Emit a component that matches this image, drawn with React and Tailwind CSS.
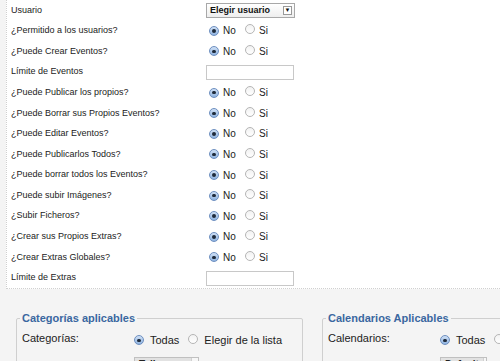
import React from "react";

function Radio({ on, size = 10 }) {
  if (on) {
    return (
      <span
        className="inline-flex items-center justify-center rounded-full border border-[#6d8fc0] bg-gradient-to-b from-[#cfe0f5] to-[#8fb3e0] shrink-0"
        style={{ width: size, height: size }}
      >
        <span className="block rounded-full bg-[#1e2a3a]" style={{ width: size * 0.35, height: size * 0.35 }} />
      </span>
    );
  }
  return (
    <span
      className="inline-block rounded-full border border-[#b5b5b5] bg-gradient-to-b from-[#f2f2f2] to-[#ffffff] shrink-0"
      style={{ width: size, height: size }}
    />
  );
}

function NoSi() {
  return (
    <div className="flex items-center text-[10px]">
      <Radio on />
      <span className="ml-[4px] w-[18px]">No</span>
      <span className="ml-[4px]"><Radio /></span>
      <span className="ml-[4px]">Si</span>
    </div>
  );
}

const rows = [
  ["Usuario", "select"],
  ["¿Permitido a los usuarios?", "radio"],
  ["¿Puede Crear Eventos?", "radio"],
  ["Límite de Eventos", "input"],
  ["¿Puede Publicar los propios?", "radio"],
  ["¿Puede Borrar sus Propios Eventos?", "radio"],
  ["¿Puede Editar Eventos?", "radio"],
  ["¿Puede Publicarlos Todos?", "radio"],
  ["¿Puede borrar todos los Eventos?", "radio"],
  ["¿Puede subir Imágenes?", "radio"],
  ["¿Subir Ficheros?", "radio"],
  ["¿Crear sus Propios Extras?", "radio"],
  ["¿Crear Extras Globales?", "radio"],
  ["Límite de Extras", "input"],
];

function ListBox({ label, w }) {
  return (
    <div className="flex mt-[8px] h-[20px] border border-[#c0c0c0]" style={{ width: w }}>
      <div className="flex-1 bg-[#e2e2e2] text-[10px] font-bold px-[4px] leading-[14px] text-[#222]">{label}</div>
      <div className="w-[7px] bg-[#f7f7f7] border-l border-[#d0d0d0]" />
    </div>
  );
}

export default function App() {
  return (
    <div
      className="w-[500px] h-[361px] overflow-hidden bg-[#f4f4f4] text-[#222]"
      style={{ fontFamily: '"Liberation Sans", Arial, sans-serif' }}
    >
      <div className="ml-[6px] bg-white border-l border-b border-dotted border-[#d0d0d0] h-[289px] text-[9px]">
        {rows.map(([label, kind], i) => (
          <div key={i} className="flex items-center h-[20.6px]">
            <div className="w-[199px] pl-[4px]">{label}</div>
            {kind === "radio" && (
              <div className="ml-[3px]"><NoSi /></div>
            )}
            {kind === "input" && (
              <div className="w-[88px] h-[15px] border border-[#c8c8c8] bg-white" />
            )}
            {kind === "select" && (
              <div className="flex items-center justify-between w-[89px] h-[15px] border border-[#a8a8a8] bg-gradient-to-b from-white to-[#eeeeee] pl-[3px] pr-[2px] text-[9px] font-bold text-[#111]">
                <span>Elegir usuario</span>
                <span className="flex items-center justify-center w-[9px] h-[9px] border border-[#999] bg-white text-[6px] leading-none">▼</span>
              </div>
            )}
          </div>
        ))}
      </div>
      <div className="flex mt-[29px] text-[11px]">
        <div className="relative ml-[16px] w-[287px] h-[60px] border border-[#cfcfcf] rounded-[2px] shrink-0">
          <div className="absolute -top-[8px] left-[3px] bg-[#f4f4f4] px-[2px] text-[11px] font-bold text-[#3a67a0] leading-[14px] whitespace-nowrap">
            Categorías aplicables
          </div>
          <div className="flex mt-[11px] pl-[5px]">
            <div className="w-[112px]">Categorías:</div>
            <div className="flex flex-col">
              <div className="flex items-center mt-[2px] whitespace-nowrap">
                <Radio on size={10} />
                <span className="ml-[6px]">Todas</span>
                <span className="ml-[9px]"><Radio size={10} /></span>
                <span className="ml-[6px]">Elegir de la lista</span>
              </div>
              <ListBox label="Talleres" w={65} />
            </div>
          </div>
        </div>
        <div className="relative ml-[19px] w-[200px] h-[60px] border border-[#cfcfcf] rounded-[2px] shrink-0">
          <div className="absolute -top-[8px] left-[3px] bg-[#f4f4f4] px-[2px] text-[11px] font-bold text-[#3a67a0] leading-[14px] whitespace-nowrap">
            Calendarios Aplicables
          </div>
          <div className="flex mt-[11px] pl-[5px]">
            <div className="w-[112px]">Calendarios:</div>
            <div className="flex flex-col">
              <div className="flex items-center mt-[2px] whitespace-nowrap">
                <Radio on size={10} />
                <span className="ml-[6px]">Todas</span>
                <span className="ml-[9px]"><Radio size={10} /></span>
              </div>
              <ListBox label="Default" w={47} />
            </div>
          </div>
        </div>
      </div>
    </div>
  );
}
